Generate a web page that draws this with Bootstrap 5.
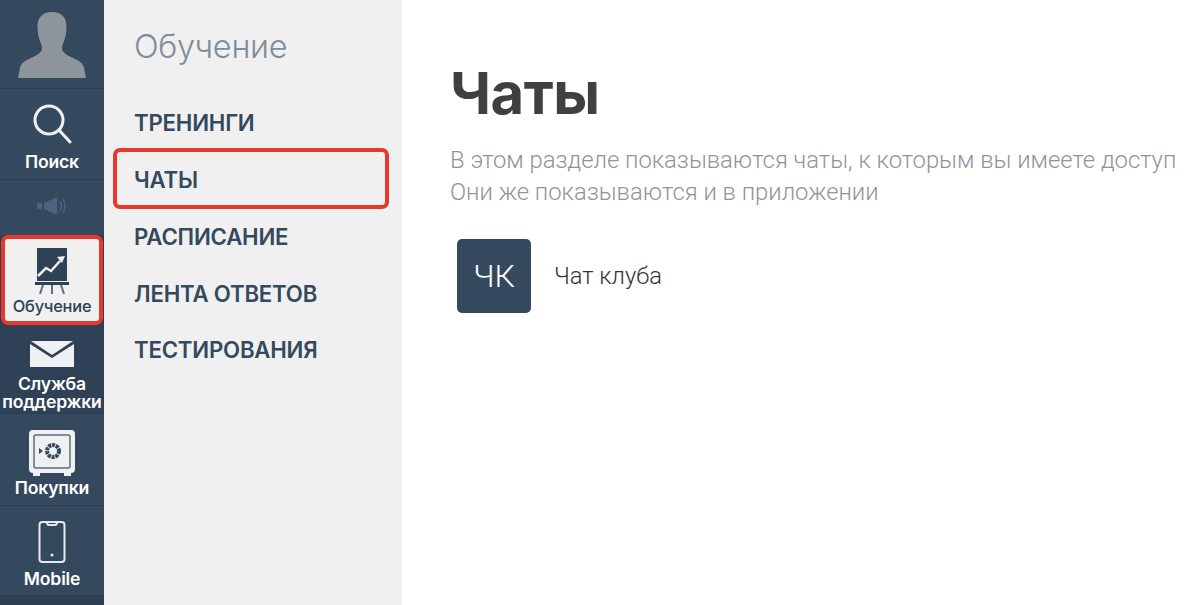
<!DOCTYPE html>
<html lang="ru">
<head>
    <meta charset="UTF-8">
    <title>Чаты</title>
    <link href="https://cdn.jsdelivr.net/npm/bootstrap@5.3.0/dist/css/bootstrap.min.css" rel="stylesheet">
    <style>
        html, body { height: 100%; overflow: hidden; }
        body { font-family: "Roboto", "Liberation Sans", sans-serif; background: #fff; }
        .app-shell { height: 605px; }
        .side-rail { width: 104px; background: #2f3f52; flex: none; font-family: "Inter", "Roboto", sans-serif; }
        .rail-item { background: #34495e; color: #fff; font-size: 17.6px; font-weight: 600; line-height: 18px; border-bottom: 1px solid #2d3e50; text-align: center; letter-spacing: -.2px; white-space: nowrap; }
        .rail-avatar { height: 89px; padding-top: 1px; }
        .rail-search { height: 91px; padding-top: 15px; }
        .rail-search svg { margin-bottom: 9px; }
        .rail-sound { height: 55px; padding-top: 16px; border-bottom: 0; }
        .rail-active { height: 90px; background: #f0f0f0; color: #2f3f52; font-size: 16.4px; font-weight: 500; padding-top: 9px; border: 4px solid #e5392c; border-radius: 7px; margin: 0 1px; line-height: 16px; }
        .rail-mail { height: 89px; padding-top: 15px; background: #2f4156; white-space: normal; }
        .rail-safe { height: 92px; padding-top: 16px; }
        .rail-safe svg { margin-bottom: 3px; }
        .rail-mobile { height: 90px; padding-top: 15px; }
        .rail-mobile svg { margin-bottom: 7px; }
        .side-menu { width: 298px; background: #f0f0f0; flex: none; padding: 25px 13px 0 9px; font-family: "Inter", "Roboto", sans-serif; }
        .menu-title { font-size: 32.500px; font-weight: 300; color: #7f8c9b; padding-left: 21px; line-height: 44px; margin-bottom: 28px; letter-spacing: -.3px; }
        .menu-link { display: block; height: 57px; padding: 11px 0 0 21px; font-size: 22.2px; line-height: 30px; font-weight: 600; color: #34495e; text-decoration: none; letter-spacing: -.2px; }
        .menu-active { height: 61px; margin: -6px 0 2px; padding: 13px 0 0 17px; border: 4px solid #e5392c; border-radius: 7px; }
        .menu-last { margin-top: -1px; }
        .main-pane { padding: 55px 0 0 48px; min-width: 0; }
        .page-title { font-size: 58px; font-weight: 700; color: #404040; line-height: 76px; margin: 0 0 13px; font-family: "Inter", "Roboto", sans-serif; letter-spacing: -.5px; }
        .page-note { font-size: 23.8px; font-weight: 300; color: #8f9499; line-height: 32px; margin: 0 0 31px; white-space: nowrap; }
        .chat-row { padding-left: 7px; gap: 23px; }
        .chat-tile { width: 74px; height: 74px; background: #34495e; border-radius: 5px; color: #fff; font-size: 32px; font-weight: 300; }
        .chat-name { font-size: 23.7px; font-weight: 300; color: #333; padding-top: 2px; }
    </style>
</head>
<body>
    <div class="app-shell d-flex">
        <div class="side-rail d-flex flex-column">
            <div class="rail-item rail-avatar d-flex justify-content-center align-items-center">
                <svg width="68" height="66" viewBox="0 0 68 66"><path d="M34 0c-11 0-15 7-14.500 16 .2 4 .7 8 2.500 13 1.500 4 2 6 2 8-1 4-5 6-11 9-8 4-10 5-11 10L0 66h68l-2-10c-1-5-3-6-11-10-6-3-10-5-11-9 0-2 .5-4 2-8 1.800-5 2.300-9 2.500-13C49 7 45 0 34 0z" fill="#8d949c"/></svg>
            </div>
            <div class="rail-item rail-search">
                <svg class="d-block mx-auto" width="40" height="40" viewBox="0 0 40 40" fill="none" stroke="#eef1f3" stroke-width="3"><circle cx="17" cy="16" r="14"/><path d="M27 26l11 12" stroke-linecap="round"/></svg>
                Поиск
            </div>
            <div class="rail-item rail-sound">
                <svg class="d-block mx-auto" width="30" height="20" viewBox="0 0 30 20" fill="#4a6480"><rect x="0" y="7" width="5" height="6" rx="1"/><path d="M7 7l13-6v18L7 13z"/><path d="M23 5q3 5 0 10M26 3q4 7 0 14" fill="none" stroke="#4a6480" stroke-width="1.500"/></svg>
            </div>
            <div class="rail-item rail-active">
                <svg class="d-block mx-auto mb-1" width="34" height="46" viewBox="0 0 34 46"><rect x="2" y="0" width="30" height="33" fill="#2f4156"/><path d="M3 28l8-8 5 3 9-10" fill="none" stroke="#f0f0f0" stroke-width="2.500"/><path d="M30 8l-8 1 5 6z" fill="#f0f0f0"/><rect x="0" y="34" width="34" height="3" fill="#2f4156"/><path d="M8 37l-3 9M17 37v9M26 37l3 9" stroke="#5d6d7e" stroke-width="2"/></svg>
                Обучение
            </div>
            <div class="rail-item rail-mail">
                <svg class="d-block mx-auto mb-2" width="44" height="27" viewBox="0 0 44 27"><path d="M1 1h42L22 15z" fill="#eef0f1"/><path d="M0 4l22 14L44 4v23H0z" fill="#eef0f1"/></svg>
                Служба поддержки
            </div>
            <div class="rail-item rail-safe">
                <svg class="d-block mx-auto" width="46" height="46" viewBox="0 0 46 46"><rect width="46" height="43" y="0" rx="4" fill="#eef0f1"/><rect x="5" y="5" width="36" height="33" rx="2" fill="none" stroke="#5d6d7e" stroke-width="1.500"/><circle cx="24" cy="21" r="6" fill="none" stroke="#34495e" stroke-width="4" stroke-dasharray="3 .8"/><path d="M10 18l4 3-4 3z" fill="#34495e"/><path d="M4 43h7v3H4zM35 43h7v3h-7z" fill="#eef0f1"/></svg>
                Покупки
            </div>
            <div class="rail-item rail-mobile">
                <svg class="d-block mx-auto" width="28" height="42" viewBox="0 0 28 42" fill="none" stroke="#e6e9ec" stroke-width="2"><rect x="1.500" y="1" width="25" height="40" rx="3"/><path d="M9 1q0 3 2 3h6q2 0 2-3"/><circle cx="14" cy="34" r="1.500" fill="#e6e9ec" stroke="none"/></svg>
                Mobile
            </div>
        </div>
        <div class="side-menu">
            <div class="menu-title">Обучение</div>
            <a class="menu-link" href="#">ТРЕНИНГИ</a>
            <a class="menu-link menu-active" href="#">ЧАТЫ</a>
            <a class="menu-link" href="#">РАСПИСАНИЕ</a>
            <a class="menu-link" href="#">ЛЕНТА ОТВЕТОВ</a>
            <a class="menu-link menu-last" href="#">ТЕСТИРОВАНИЯ</a>
        </div>
        <div class="main-pane flex-grow-1">
            <h1 class="page-title">Чаты</h1>
            <p class="page-note">В этом разделе показываются чаты, к которым вы имеете доступ<br>Они же показываются и в приложении</p>
            <div class="chat-row d-flex align-items-center">
                <div class="chat-tile d-flex align-items-center justify-content-center">ЧК</div>
                <div class="chat-name">Чат клуба</div>
            </div>
        </div>
    </div>
    <script src="https://cdn.jsdelivr.net/npm/bootstrap@5.3.0/dist/js/bootstrap.bundle.min.js"></script>
</body>
</html>
